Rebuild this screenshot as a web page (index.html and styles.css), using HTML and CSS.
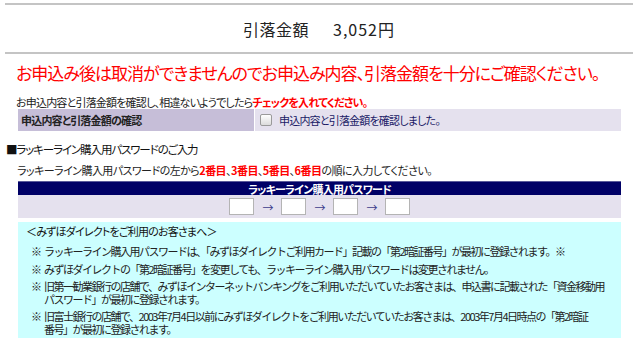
FILE: index.html
```html
<!doctype html>
<html lang="ja">
    <head>
        <meta charset="utf-8">
        <link rel="stylesheet" href="styles.css">
    </head>
    <body>
        <div class="amount">
            <span class="amountLabel">引落金額</span><span class="amountValue">3,052円</span>
        </div>

        <p class="warn">お申込み後は取消ができませんのでお申込み内容、引落金額を十分にご確認ください。</p>

        <p class="lead">お申込内容と引落金額を確認し、相違ないようでしたら<b class="red">チェックを入れてください。</b></p>
        <table class="confirm">
            <tr>
                <th>申込内容と引落金額の確認</th>
                <td><label><input type="checkbox" class="chk"/>申込内容と引落金額を確認しました。</label></td>
            </tr>
        </table>

        <h3 class="sec">■ラッキーライン購入用パスワードのご入力</h3>
        <p class="lead2">ラッキーライン購入用パスワードの左から<b class="red">2番目</b>、<b class="red">3番目</b>、<b class="red">5番目</b>、<b class="red">6番目</b>の順に入力してください。</p>

        <table class="pw">
            <tr><th>ラッキーライン購入用パスワード</th></tr>
            <tr>
                <td>
                    <div class="pwRow">
                        <input type="password" class="pwBox"/>
                        <span class="arrow">→</span>
                        <input type="password" class="pwBox"/>
                        <span class="arrow">→</span>
                        <input type="password" class="pwBox"/>
                        <span class="arrow">→</span>
                        <input type="password" class="pwBox"/>
                    </div>
                </td>
            </tr>
        </table>

        <div class="info">
            <div class="infoTitle">＜みずほダイレクトをご利用のお客さまへ＞</div>
            <ul class="notes">
                <li><span class="mark">※</span><span>ラッキーライン購入用パスワードは、「みずほダイレクトご利用カード」記載の「第2暗証番号」が最初に登録されます。※</span></li>
                <li><span class="mark">※</span><span>みずほダイレクトの「第2暗証番号」を変更しても、ラッキーライン購入用パスワードは変更されません。</span></li>
                <li><span class="mark">※</span><span>旧第一勧業銀行の店舗で、みずほインターネットバンキングをご利用いただいていたお客さまは、申込書に記載された「資金移動用<br>パスワード」が最初に登録されます。</span></li>
                <li><span class="mark">※</span><span>旧富士銀行の店舗で、2003年7月4日以前にみずほダイレクトをご利用いただいていたお客さまは、2003年7月4日時点の「第2暗証<br>番号」が最初に登録されます。</span></li>
            </ul>
        </div>
    </body>
</html>
```

FILE: styles.css
```css
body
{
    margin: 0;
    padding: 3px 7px 0 5px;
    font-family: "Noto Sans CJK JP", sans-serif;
    font-size: 11px;
    letter-spacing: -0.8px;
    font-feature-settings: "palt";
    color: #222;
    background: #fff;
}
.red
{
    color: #ff0000;
}
.amount
{
    border-top: 2px solid #c4c4c4;
    border-bottom: 2px solid #c4c4c4;
    height: 47px;
    display: flex;
    align-items: center;
    justify-content: center;
    font-size: 16px;
    font-feature-settings: normal;
    color: #222;
}
.amountLabel
{
    letter-spacing: 0.5px;
}
.amountValue
{
    margin-left: 24px;
    letter-spacing: 1px;
}
.warn
{
    margin: 8px 0 0 11px;
    font-size: 17px;
    letter-spacing: -1px;
    line-height: 22px;
    color: #ff0000;
    white-space: nowrap;
}
.lead
{
    margin: 11px 0 0 11px;
    line-height: 14px;
}
.confirm
{
    margin: 0 0 0 12px;
    width: 605px;
    border-collapse: separate;
    border-spacing: 1px 0;
}
.confirm th
{
    width: 233px;
    height: 22px;
    padding: 0 0 0 3px;
    background: #c6bed8;
    text-align: left;
    font-weight: bold;
    color: #222;
}
.confirm td
{
    background: #e5e1ee;
    padding: 0 0 0 4px;
    color: #1a1a66;
}
.confirm label
{
    display: flex;
    align-items: center;
}
.chk
{
    appearance: none;
    margin: 0 7px 0 1px;
    width: 12px;
    height: 12px;
    border: 1px solid #9a9a9a;
    border-radius: 2px;
    background: linear-gradient(#ffffff, #dcdcdc);
}
.sec
{
    margin: 10px 0 0 1px;
    font-size: 11.5px;
    letter-spacing: -1.1px;
    line-height: 16px;
    font-weight: normal;
    color: #111;
}
.lead2
{
    margin: 6px 0 0 12px;
    line-height: 14px;
    letter-spacing: -0.55px;
}
.pw
{
    margin: 4px 0 0 13px;
    width: 603px;
    border-collapse: collapse;
}
.pw th
{
    height: 13px;
    padding: 0;
    background: #000066;
    border-top: 1px solid #5a5a9a;
    color: #fff;
    font-weight: bold;
    line-height: 12px;
}
.pw td
{
    background: #e5e1ee;
    height: 23px;
    padding: 0;
}
.pwRow
{
    display: flex;
    align-items: center;
    justify-content: center;
    gap: 8px;
}
.pwBox
{
    width: 21px;
    height: 13px;
    margin: 0;
    padding: 1px;
    border: 1px solid #b4b4b4;
    background: #fff;
}
.arrow
{
    width: 11px;
    color: #3c3c8c;
    font-size: 11px;
    text-align: center;
}
.info
{
    margin: 4px 0 0 13px;
    width: 595px;
    padding: 2px 0 10px 8px;
    background: #ccffff;
}
.infoTitle
{
    line-height: 14px;
    color: #111;
}
.notes
{
    list-style: none;
    margin: 7px 0 0 0;
    padding: 0 0 0 5px;
    font-feature-settings: normal;
    letter-spacing: -1.5px;
    white-space: nowrap;
}
.notes li
{
    display: flex;
    line-height: 13px;
    margin-bottom: 4px;
    color: #222;
}
.notes li:first-child
{
    margin-bottom: 5px;
}
.mark
{
    width: 13px;
    flex: none;
    letter-spacing: 0;
}
```
